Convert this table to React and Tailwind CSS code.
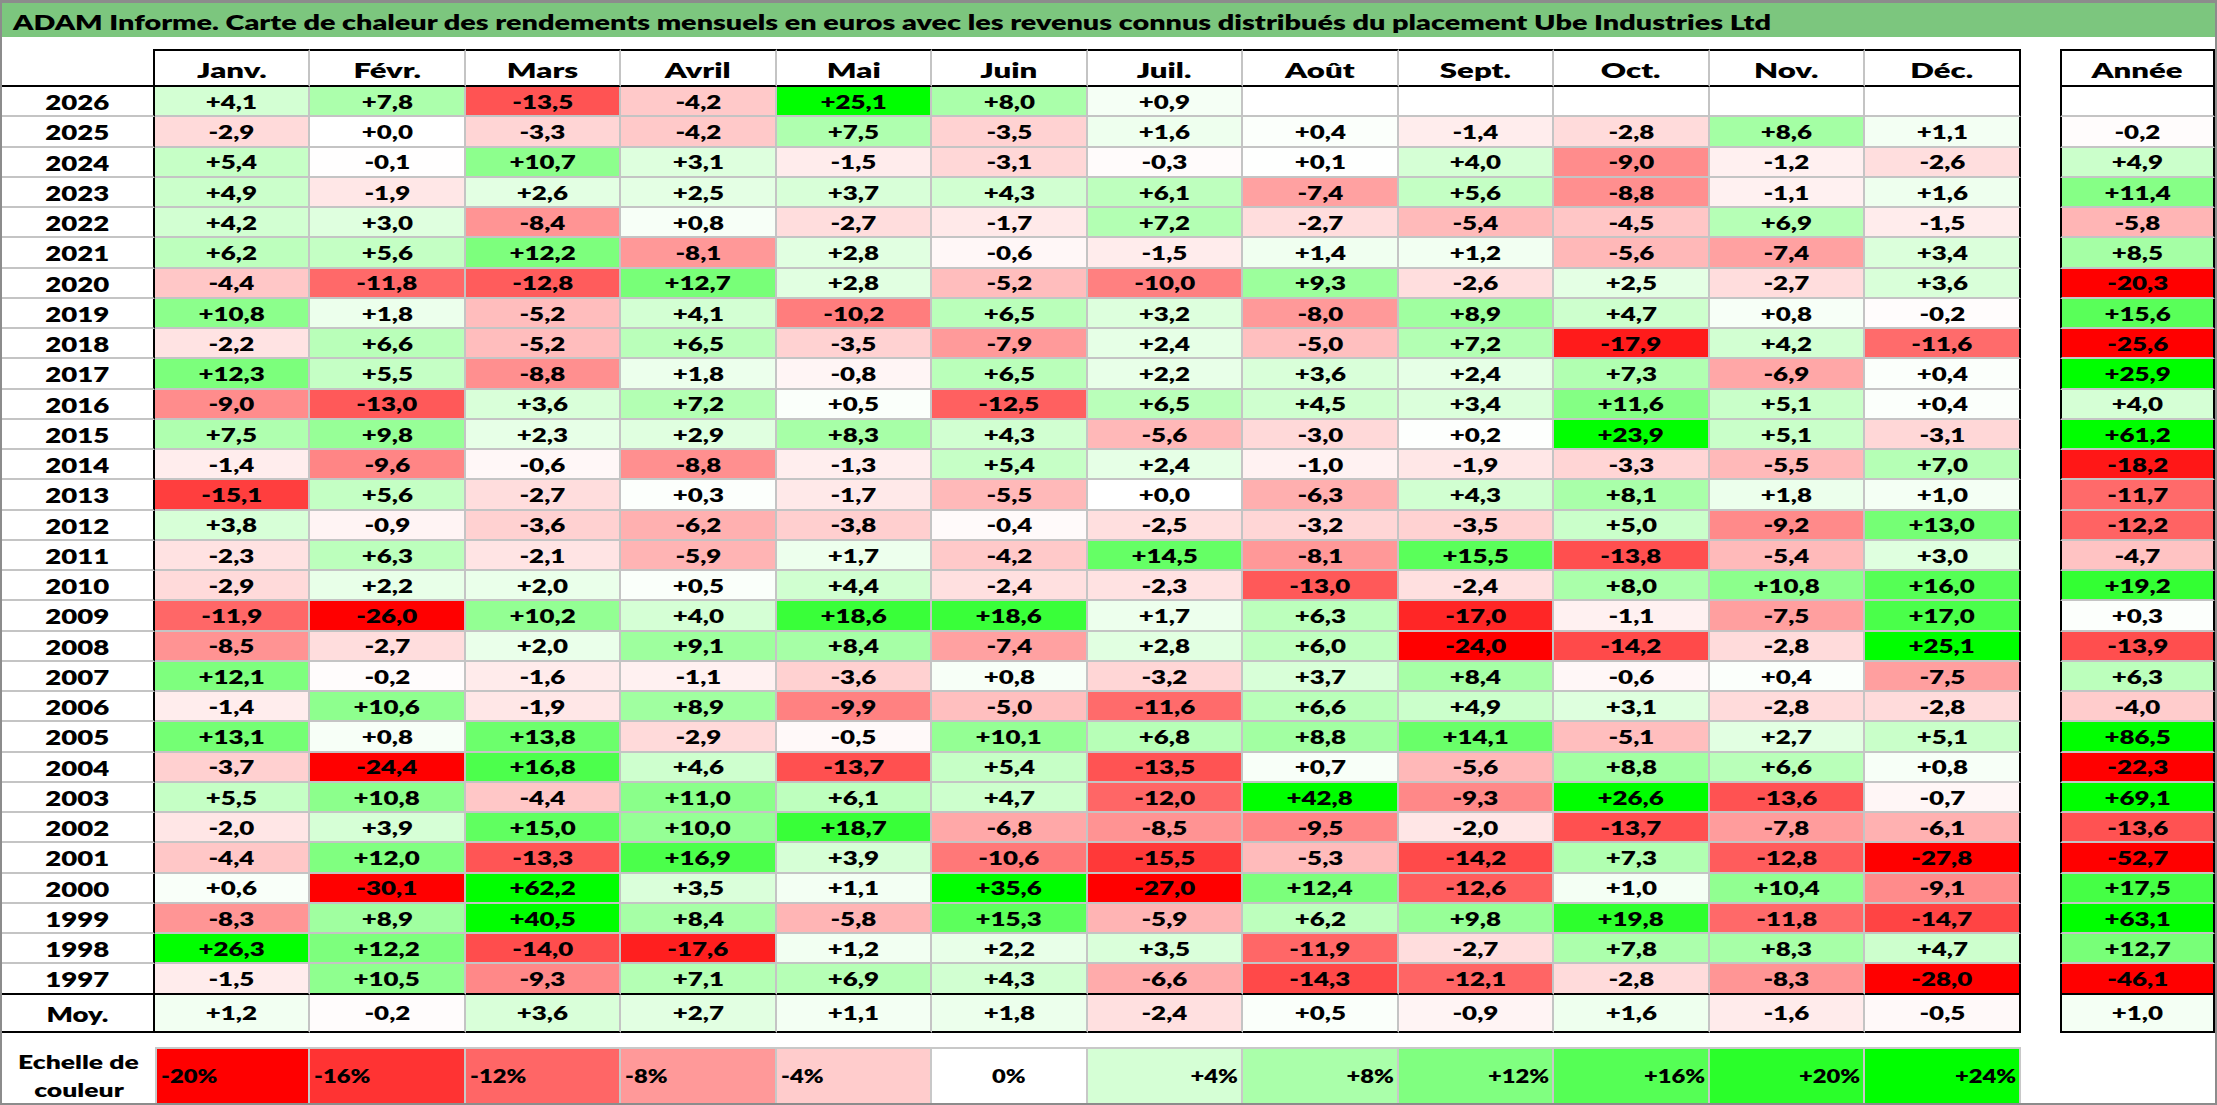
import React from 'react';

const MONTHS = ['Janv.', 'Févr.', 'Mars', 'Avril', 'Mai', 'Juin', 'Juil.', 'Août', 'Sept.', 'Oct.', 'Nov.', 'Déc.'];

// widths of the 12 month columns (155.5px on average)
const COLW = ['w-[155px]', 'w-[156px]', 'w-[155px]', 'w-[156px]', 'w-[155px]', 'w-[156px]', 'w-[155px]', 'w-[156px]', 'w-[155px]', 'w-[156px]', 'w-[155px]', 'w-[156px]'];

const DATA = [
  ['2026', '+4,1 +7,8 -13,5 -4,2 +25,1 +8,0 +0,9 _ _ _ _ _ _'],
  ['2025', '-2,9 +0,0 -3,3 -4,2 +7,5 -3,5 +1,6 +0,4 -1,4 -2,8 +8,6 +1,1 -0,2'],
  ['2024', '+5,4 -0,1 +10,7 +3,1 -1,5 -3,1 -0,3 +0,1 +4,0 -9,0 -1,2 -2,6 +4,9'],
  ['2023', '+4,9 -1,9 +2,6 +2,5 +3,7 +4,3 +6,1 -7,4 +5,6 -8,8 -1,1 +1,6 +11,4'],
  ['2022', '+4,2 +3,0 -8,4 +0,8 -2,7 -1,7 +7,2 -2,7 -5,4 -4,5 +6,9 -1,5 -5,8'],
  ['2021', '+6,2 +5,6 +12,2 -8,1 +2,8 -0,6 -1,5 +1,4 +1,2 -5,6 -7,4 +3,4 +8,5'],
  ['2020', '-4,4 -11,8 -12,8 +12,7 +2,8 -5,2 -10,0 +9,3 -2,6 +2,5 -2,7 +3,6 -20,3'],
  ['2019', '+10,8 +1,8 -5,2 +4,1 -10,2 +6,5 +3,2 -8,0 +8,9 +4,7 +0,8 -0,2 +15,6'],
  ['2018', '-2,2 +6,6 -5,2 +6,5 -3,5 -7,9 +2,4 -5,0 +7,2 -17,9 +4,2 -11,6 -25,6'],
  ['2017', '+12,3 +5,5 -8,8 +1,8 -0,8 +6,5 +2,2 +3,6 +2,4 +7,3 -6,9 +0,4 +25,9'],
  ['2016', '-9,0 -13,0 +3,6 +7,2 +0,5 -12,5 +6,5 +4,5 +3,4 +11,6 +5,1 +0,4 +4,0'],
  ['2015', '+7,5 +9,8 +2,3 +2,9 +8,3 +4,3 -5,6 -3,0 +0,2 +23,9 +5,1 -3,1 +61,2'],
  ['2014', '-1,4 -9,6 -0,6 -8,8 -1,3 +5,4 +2,4 -1,0 -1,9 -3,3 -5,5 +7,0 -18,2'],
  ['2013', '-15,1 +5,6 -2,7 +0,3 -1,7 -5,5 +0,0 -6,3 +4,3 +8,1 +1,8 +1,0 -11,7'],
  ['2012', '+3,8 -0,9 -3,6 -6,2 -3,8 -0,4 -2,5 -3,2 -3,5 +5,0 -9,2 +13,0 -12,2'],
  ['2011', '-2,3 +6,3 -2,1 -5,9 +1,7 -4,2 +14,5 -8,1 +15,5 -13,8 -5,4 +3,0 -4,7'],
  ['2010', '-2,9 +2,2 +2,0 +0,5 +4,4 -2,4 -2,3 -13,0 -2,4 +8,0 +10,8 +16,0 +19,2'],
  ['2009', '-11,9 -26,0 +10,2 +4,0 +18,6 +18,6 +1,7 +6,3 -17,0 -1,1 -7,5 +17,0 +0,3'],
  ['2008', '-8,5 -2,7 +2,0 +9,1 +8,4 -7,4 +2,8 +6,0 -24,0 -14,2 -2,8 +25,1 -13,9'],
  ['2007', '+12,1 -0,2 -1,6 -1,1 -3,6 +0,8 -3,2 +3,7 +8,4 -0,6 +0,4 -7,5 +6,3'],
  ['2006', '-1,4 +10,6 -1,9 +8,9 -9,9 -5,0 -11,6 +6,6 +4,9 +3,1 -2,8 -2,8 -4,0'],
  ['2005', '+13,1 +0,8 +13,8 -2,9 -0,5 +10,1 +6,8 +8,8 +14,1 -5,1 +2,7 +5,1 +86,5'],
  ['2004', '-3,7 -24,4 +16,8 +4,6 -13,7 +5,4 -13,5 +0,7 -5,6 +8,8 +6,6 +0,8 -22,3'],
  ['2003', '+5,5 +10,8 -4,4 +11,0 +6,1 +4,7 -12,0 +42,8 -9,3 +26,6 -13,6 -0,7 +69,1'],
  ['2002', '-2,0 +3,9 +15,0 +10,0 +18,7 -6,8 -8,5 -9,5 -2,0 -13,7 -7,8 -6,1 -13,6'],
  ['2001', '-4,4 +12,0 -13,3 +16,9 +3,9 -10,6 -15,5 -5,3 -14,2 +7,3 -12,8 -27,8 -52,7'],
  ['2000', '+0,6 -30,1 +62,2 +3,5 +1,1 +35,6 -27,0 +12,4 -12,6 +1,0 +10,4 -9,1 +17,5'],
  ['1999', '-8,3 +8,9 +40,5 +8,4 -5,8 +15,3 -5,9 +6,2 +9,8 +19,8 -11,8 -14,7 +63,1'],
  ['1998', '+26,3 +12,2 -14,0 -17,6 +1,2 +2,2 +3,5 -11,9 -2,7 +7,8 +8,3 +4,7 +12,7'],
  ['1997', '-1,5 +10,5 -9,3 +7,1 +6,9 +4,3 -6,6 -14,3 -12,1 -2,8 -8,3 -28,0 -46,1'],
];

const AVG = '+1,2 -0,2 +3,6 +2,7 +1,1 +1,8 -2,4 +0,5 -0,9 +1,6 -1,6 -0,5 +1,0';

const SCALE = [
  { label: '-20%', v: -20, align: 'left' },
  { label: '-16%', v: -16, align: 'left' },
  { label: '-12%', v: -12, align: 'left' },
  { label: '-8%', v: -8, align: 'left' },
  { label: '-4%', v: -4, align: 'left' },
  { label: '0%', v: 0, align: 'center' },
  { label: '+4%', v: 4, align: 'right' },
  { label: '+8%', v: 8, align: 'right' },
  { label: '+12%', v: 12, align: 'right' },
  { label: '+16%', v: 16, align: 'right' },
  { label: '+20%', v: 20, align: 'right' },
  { label: '+24%', v: 24, align: 'right' },
];

// red saturates at -20, green at +24
function heat(v) {
  if (v === null || v === 0) return '#ffffff';
  if (v < 0) {
    const c = Math.round(255 * (1 - Math.min(1, -v / 20)));
    return `rgb(255,${c},${c})`;
  }
  const c = Math.round(255 * (1 - Math.min(1, v / 24)));
  return `rgb(${c},255,${c})`;
}

const toNum = (s) => (s === '_' ? null : parseFloat(s.replace(',', '.')));

function Num({ children }) {
  return <span className="inline-block scale-x-[1.4] text-[18.5px] leading-none">{children}</span>;
}

function YearLabel({ children }) {
  return <span className="inline-block scale-x-[1.38] text-[20px] leading-none">{children}</span>;
}

function HeadLabel({ children }) {
  return <span className="inline-block scale-x-[1.52] text-[20.5px] leading-none">{children}</span>;
}

function Row({ year, values, last, tall }) {
  const h = tall ? 'h-[38px]' : 'h-[30.25px]';
  const bottom = last ? 'border-black' : 'border-[#c4c4c4]';
  const cells = values.split(' ');
  return (
    <div className={`flex ${h} shrink-0`}>
      <div className={`w-[153px] border-r-2 border-r-black border-b-2 ${bottom} flex items-center justify-center pt-[2px]`}>
        <YearLabel>{year}</YearLabel>
      </div>
      {cells.slice(0, 12).map((s, i) => (
        <div
          key={i}
          className={`${COLW[i]} border-b-2 ${bottom} border-r-2 ${i === 11 ? 'border-r-black' : 'border-r-[#c4c4c4]'} flex items-center justify-center pt-[2px]`}
          style={{ backgroundColor: heat(toNum(s)) }}
        >
          {s !== '_' && <Num>{s}</Num>}
        </div>
      ))}
      <div className="w-[39px]" />
      <div
        className={`w-[155px] border-x-2 border-x-black border-b-2 ${bottom} flex items-center justify-center pt-[2px]`}
        style={{ backgroundColor: heat(toNum(cells[12])) }}
      >
        {cells[12] !== '_' && <Num>{cells[12]}</Num>}
      </div>
    </div>
  );
}

export default function App() {
  return (
    <div className="w-[2217px] h-[1105px] overflow-hidden bg-white border-t-[3px] border-x-2 border-b-2 border-[#8c8c8c] flex flex-col font-['Lato','Liberation_Sans',sans-serif] font-extrabold text-black">
      <div className="h-[34px] shrink-0 bg-[#7cc67e] flex items-center pl-[11px] pt-[3px]">
        <span className="inline-block origin-left scale-x-[1.37] text-[21px] leading-none">
          ADAM Informe. Carte de chaleur des rendements mensuels en euros avec les revenus connus distribués du placement Ube Industries Ltd
        </span>
      </div>

      <div className="flex h-[38px] shrink-0 mt-[12px]">
        <div className="w-[153px] border-r-2 border-b-2 border-black" />
        {MONTHS.map((m, i) => (
          <div
            key={m}
            className={`${COLW[i]} border-y-2 border-y-black border-r-2 ${i === 11 ? 'border-r-black' : 'border-r-[#c4c4c4]'} flex items-center justify-center pt-[4px]`}
          >
            <HeadLabel>{m}</HeadLabel>
          </div>
        ))}
        <div className="w-[39px]" />
        <div className="w-[155px] border-2 border-black flex items-center justify-center pt-[4px]">
          <HeadLabel>Année</HeadLabel>
        </div>
      </div>

      {DATA.map(([year, values], i) => (
        <Row key={year} year={year} values={values} last={i === DATA.length - 1} />
      ))}
      <Row year="Moy." values={AVG} last tall />

      <div className="flex h-[56px] shrink-0 mt-[14px]">
        <div className="w-[153px] flex flex-col items-center justify-center">
          <span className="inline-block scale-x-[1.36] text-[19.5px] leading-[30px]">Echelle de</span>
          <span className="inline-block scale-x-[1.36] text-[19.5px] leading-[26px]">couleur</span>
        </div>
        {SCALE.map((c, i) => (
          <div
            key={c.label}
            className={`${COLW[i]} border-t-2 border-r-2 border-[#c8c8c8] ${i === 0 ? 'border-l-2' : ''} flex items-center ${
              c.align === 'left' ? 'justify-start pl-[4px]' : c.align === 'right' ? 'justify-end pr-[3px]' : 'justify-center'
            }`}
            style={{ backgroundColor: heat(c.v) }}
          >
            <span
              className={`inline-block scale-x-[1.22] text-[19.5px] leading-none ${
                c.align === 'left' ? 'origin-left' : c.align === 'right' ? 'origin-right' : ''
              }`}
            >
              {c.label}
            </span>
          </div>
        ))}
      </div>
    </div>
  );
}
